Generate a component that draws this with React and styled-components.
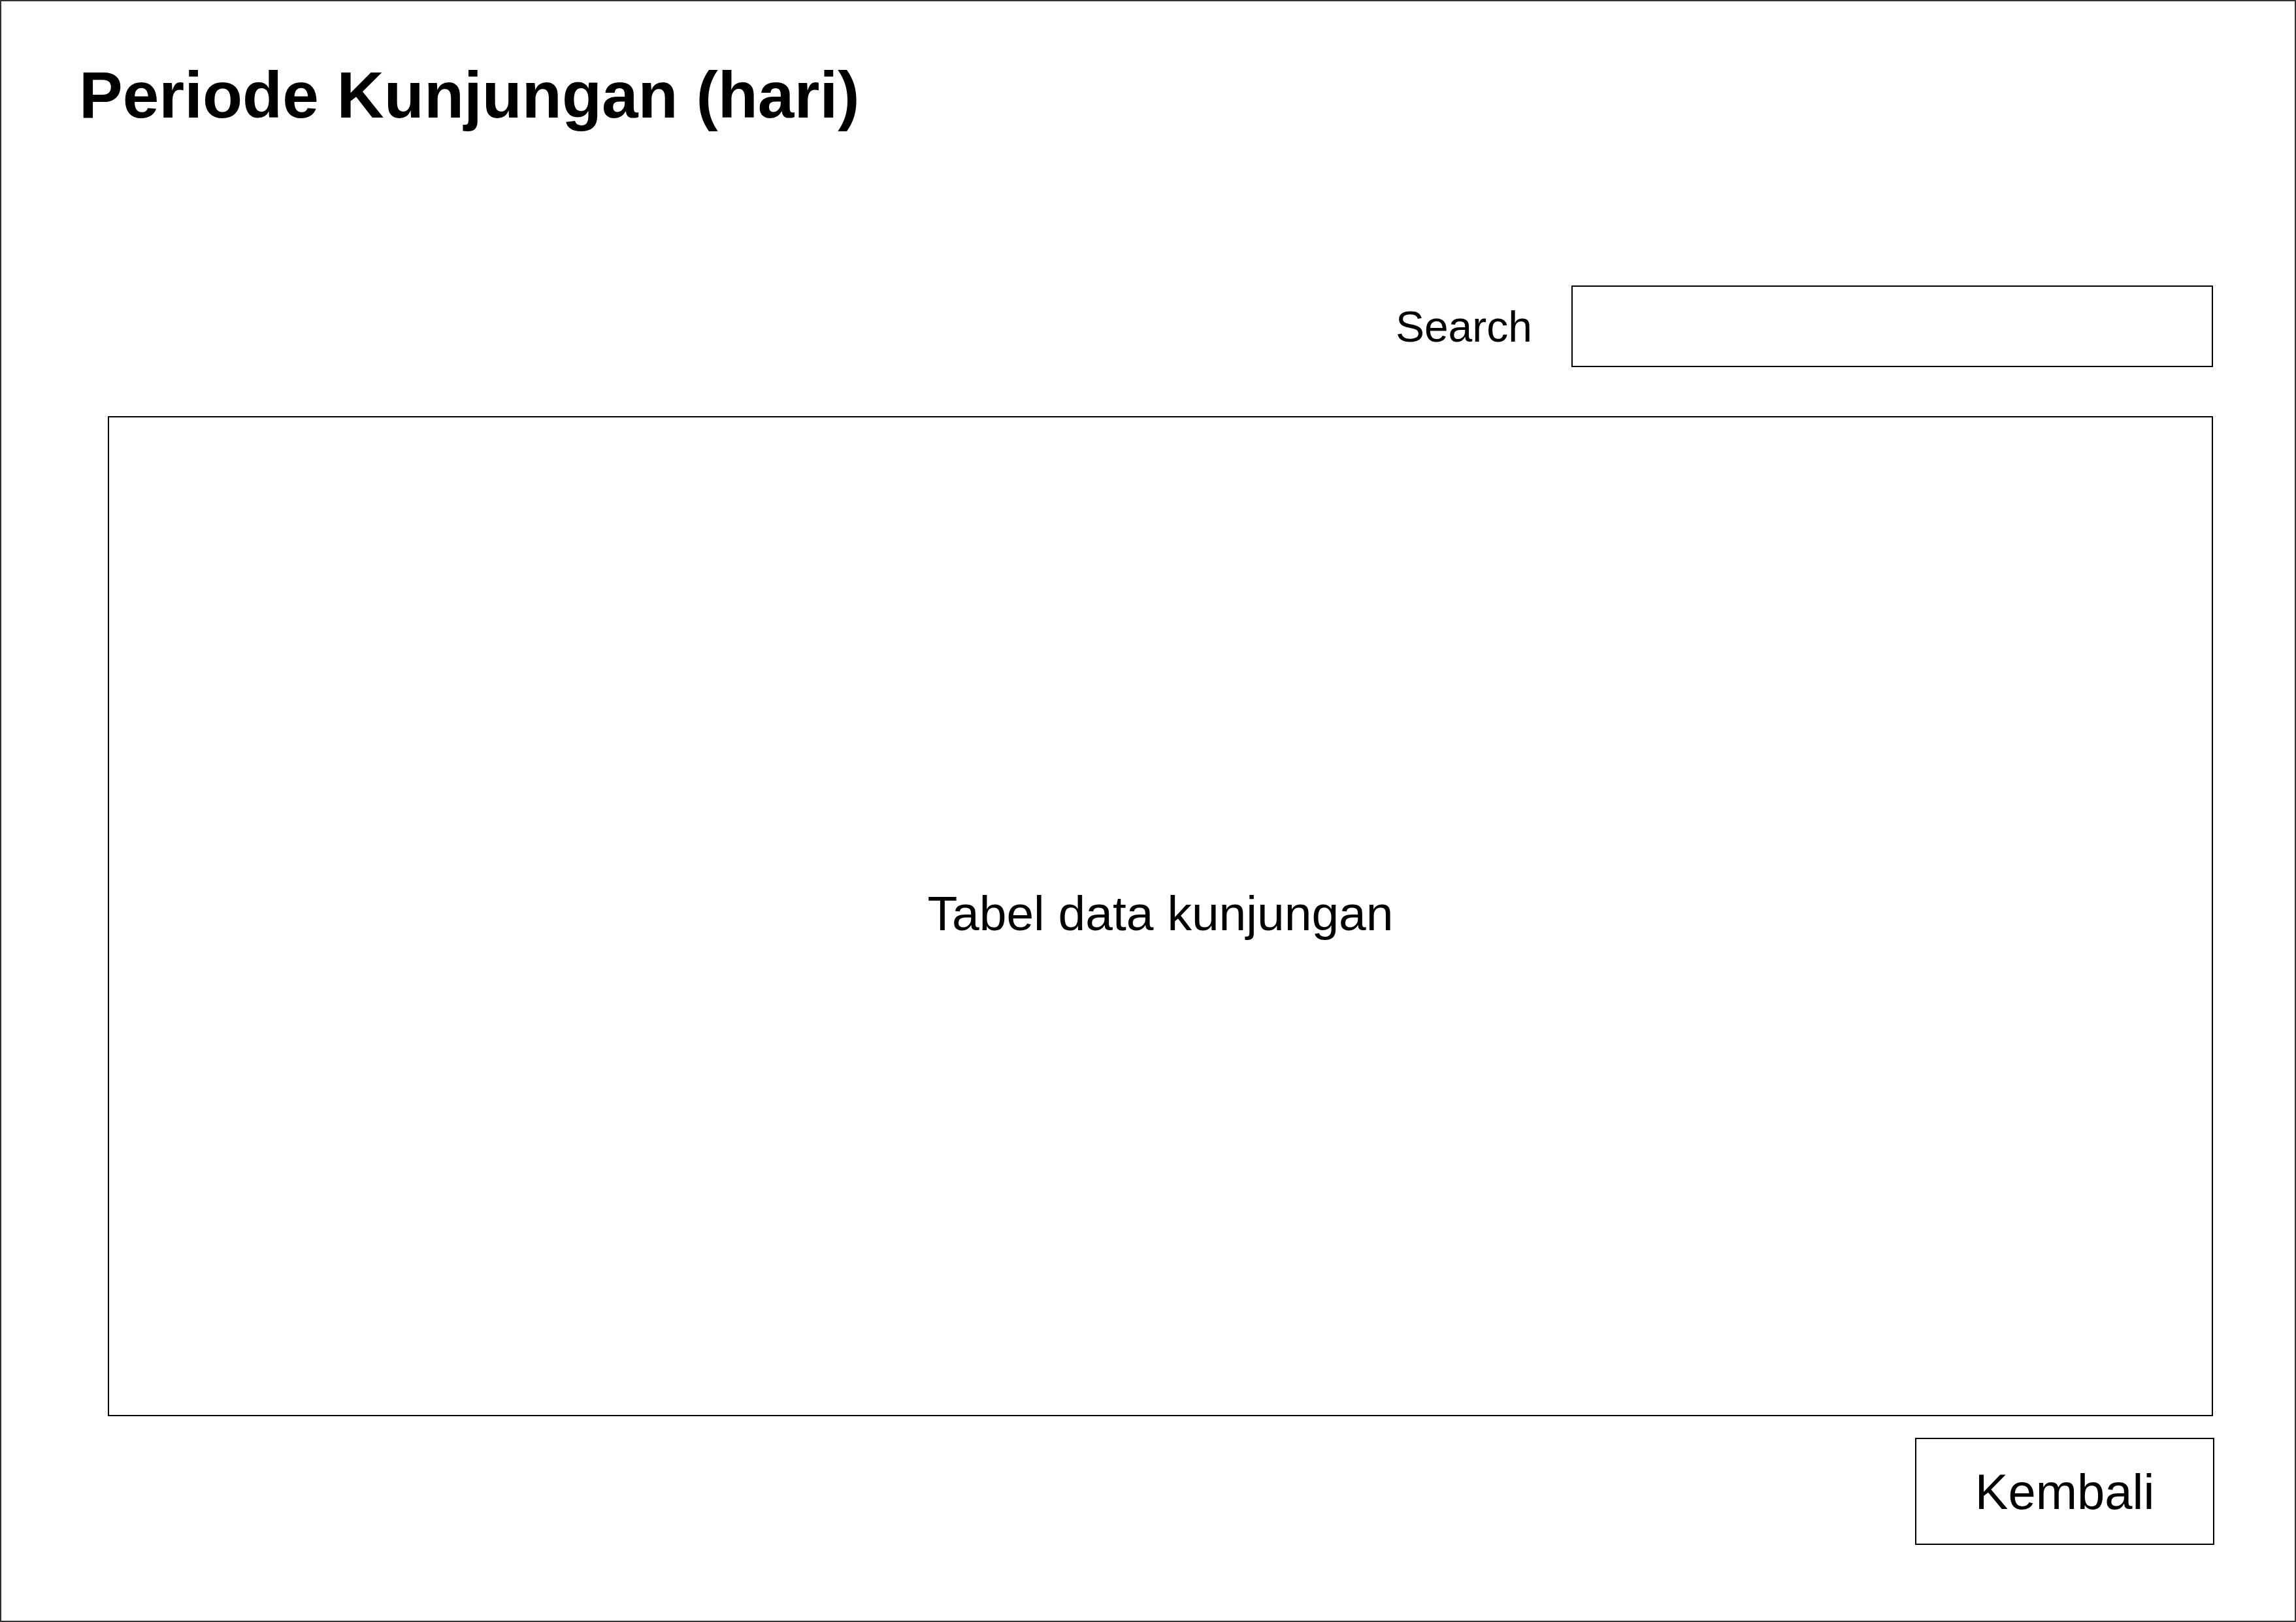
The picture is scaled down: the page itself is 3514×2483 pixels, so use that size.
import React from "react"
import styled, { createGlobalStyle } from "styled-components"

const GlobalStyle = createGlobalStyle`
  html, body {
    margin: 0;
    padding: 0;
    background: #fff;
  }
  * {
    box-sizing: border-box;
  }
`

const Frame = styled.div`
  width: 3514px;
  height: 2483px;
  border: 2px solid #333;
  padding: 93px 125px 0 119px;
  display: flex;
  flex-direction: column;
  font-family: "Liberation Sans", Arial, sans-serif;
  color: #000;
  background: #fff;
`

const Title = styled.h1`
  margin: 0;
  font-size: 100px;
  line-height: 100px;
  font-weight: 700;
`

const SearchRow = styled.div`
  margin-top: 242px;
  display: flex;
  justify-content: flex-end;
  align-items: center;
  gap: 60px;
`

const Label = styled.label`
  font-size: 66px;
  line-height: 1;
`

const SearchInput = styled.input`
  width: 982px;
  height: 125px;
  border: 2px solid #000;
  border-radius: 0;
  background: #fff;
  outline: none;
  padding: 0 20px;
  font-family: inherit;
  font-size: 66px;
`

const DataTable = styled.div`
  margin: 75px 0 0 44px;
  height: 1531px;
  border: 2px solid #000;
  display: flex;
  align-items: center;
  justify-content: center;
  font-size: 75px;
  padding-bottom: 10px;
`

const Footer = styled.div`
  margin-top: 33px;
  margin-right: -2px;
  display: flex;
  justify-content: flex-end;
`

const Button = styled.button`
  width: 458px;
  height: 164px;
  border: 2px solid #000;
  border-radius: 0;
  background: #fff;
  font-family: inherit;
  font-size: 76px;
  color: #000;
  padding: 0;
  cursor: pointer;
`

const App = () => {
  return (
    <>
      <GlobalStyle />
      <Frame>
        <Title>Periode Kunjungan (hari)</Title>
        <SearchRow>
          <Label htmlFor="search">Search</Label>
          <SearchInput id="search" type="text" />
        </SearchRow>
        <DataTable>Tabel data kunjungan</DataTable>
        <Footer>
          <Button type="button">Kembali</Button>
        </Footer>
      </Frame>
    </>
  )
}

export default App
